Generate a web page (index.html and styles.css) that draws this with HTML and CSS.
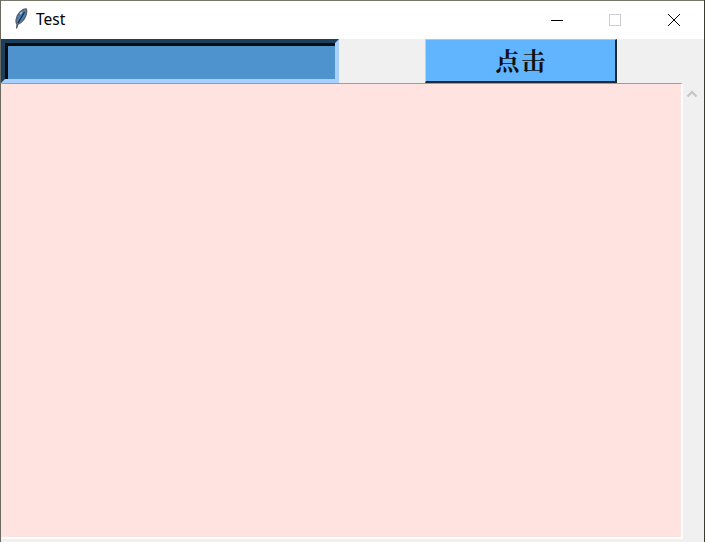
FILE: index.html
```html
<!DOCTYPE html>
<html>
	<head>
		<meta charset="UTF-8">
		<title>Test</title>
		<link rel="stylesheet" href="styles.css">
	</head>
	<body>
		<div class="window">
			<div class="titlebar">
				<svg class="feather" width="16" height="22" viewBox="0 0 16 22">
					<path d="M3.5 20.5 L4 16.5 C2 14 3 8 7 4 C9 2 12 0.5 13.5 1 C14 4 13 9 10 12.5 C8.5 14.5 6.5 16 4.8 16.5 Z" fill="#4a7fbd" stroke="#5b5b5b" stroke-width="1.2"/>
					<path d="M5 15 L11.5 4" stroke="#16283c" stroke-width="1.2" fill="none"/>
					<path d="M7 6 L9 4" stroke="#a9cdf0" stroke-width="1.2" fill="none"/>
				</svg>
				<span class="title">Test</span>
				<div class="controls">
					<svg class="ctl" width="14" height="14" viewBox="0 0 14 14"><path d="M1 7.5 H13" stroke="#000" stroke-width="1"/></svg>
					<svg class="ctl" width="14" height="14" viewBox="0 0 14 14"><rect x="1.5" y="1.5" width="11" height="11" fill="none" stroke="#ccc" stroke-width="1"/></svg>
					<svg class="ctl close" width="14" height="14" viewBox="0 0 14 14"><path d="M1 1 L13 13 M13 1 L1 13" stroke="#000" stroke-width="1"/></svg>
				</div>
			</div>
			<div class="toolbar">
				<div class="entry"></div>
				<div class="button"><span class="label">点击</span></div>
			</div>
			<div class="content">
				<div class="text"></div>
				<div class="scrollbar">
					<svg width="12" height="8" viewBox="0 0 12 8"><path d="M1.5 6.5 L6 2 L10.5 6.5" fill="none" stroke="#c4c4c4" stroke-width="2"/></svg>
				</div>
			</div>
		</div>
	</body>
</html>
```

FILE: styles.css
```css
*{
	margin: 0;
	padding: 0;
	box-sizing: border-box;
}

html,body{
	height: 100%;
	overflow: hidden;
}

body{
	font-family: "Liberation Sans", "Noto Sans CJK SC", sans-serif;
	background: #f0f0f0;
}

.window{
	width: 705px;
	height: 542px;
	display: flex;
	flex-direction: column;
	background: #f0f0f0;
	border-left: 1px solid #6a6a60;
	border-right: 1px solid #3c3c2c;
}

.titlebar{
	height: 39px;
	flex: none;
	display: flex;
	align-items: center;
	padding-left: 12px;
	background: #fff;
	border-top: 1px solid #77776a;
}

.feather{
	flex: none;
	margin-top: -2px;
}

.title{
	margin-left: 7px;
	margin-top: -2px;
	font-family: "Noto Sans", "Liberation Sans", sans-serif;
	font-size: 15.5px;
	color: #000;
}

.controls{
	margin-left: auto;
	display: flex;
	gap: 44px;
	padding-right: 23px;
	margin-top: -1px;
}

.controls .close{
	margin-left: 1px;
}

.toolbar{
	height: 44px;
	flex: none;
	display: flex;
	justify-content: space-between;
	padding-right: 87px;
}

.entry{
	width: 338px;
	background: #4e93cd;
	border-style: solid;
	border-width: 4px;
	border-color: #1c3f5e #a9d0fa #a9d0fa #1c3f5e;
	box-shadow: inset 3px 3px 0 #0c0c0c;
}

.button{
	width: 192px;
	display: flex;
	align-items: center;
	justify-content: center;
	font-family: "Noto Serif CJK SC", "Noto Sans CJK SC", serif;
	font-size: 24px;
	font-weight: bold;
	color: #111;
	background: #61b5ff;
	border-right: 2px solid #1c2730;
	border-bottom: 2px solid #1c2730;
	border-top: 1px solid #8fd0ff;
	border-left: 1px solid #8fe0ff;
}

.label{
	letter-spacing: 2px;
	margin-left: 2px;
	margin-bottom: 3px;
}

.content{
	flex: 1;
	display: flex;
	padding-bottom: 3px;
}

.text{
	width: 682px;
	background: #ffe3e0;
	border-top: 1px solid #a09a98;
	border-left: 1px solid #e8e8e8;
	border-right: 2px solid #fff;
	border-bottom: 2px solid #fff;
}

.scrollbar{
	flex: 1;
	display: flex;
	justify-content: center;
	padding-top: 7px;
	padding-right: 3px;
}
```
